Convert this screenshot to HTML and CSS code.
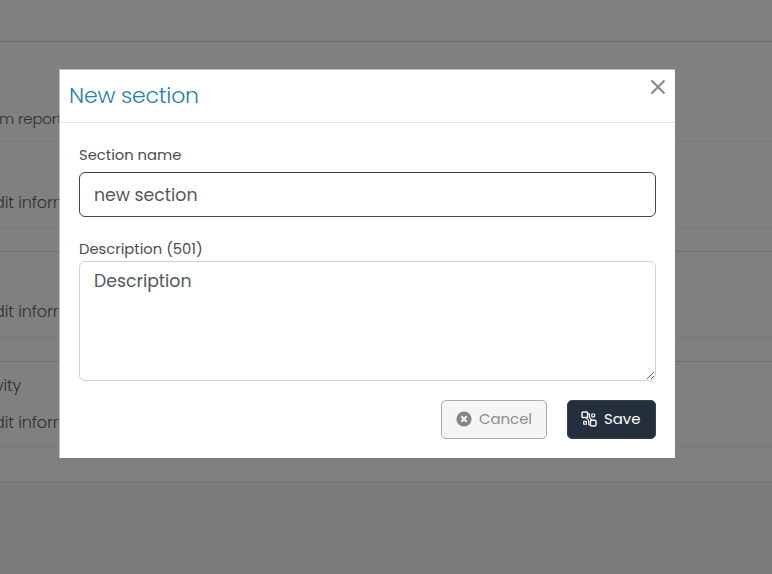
FILE: index.html
```html
<!DOCTYPE html>
<html lang="en">
<head>
<meta charset="utf-8">
<title>New section</title>
<link rel="stylesheet" href="styles.css">
</head>
<body>
<main class="page">
  <div class="topbar"></div>
  <section class="card first"><p class="line report">m report</p></section>
  <section class="card second"><p class="line edit">dit inform</p></section>
  <div class="gap"></div>
  <section class="card third"><p class="line edit">dit inform</p></section>
  <div class="gap"></div>
  <section class="card fourth"><p class="line activity">vity</p><p class="line edit">dit inform</p></section>
  <div class="end"></div>
</main>
<div class="overlay">
  <form class="dialog">
    <header class="dialog-header">
      <h1 class="title">New section</h1>
      <button type="button" class="close" aria-label="Close">
        <svg width="16" height="16" viewBox="0 0 16 16"><path d="M1.5 1.5l13 13M14.5 1.5l-13 13" fill="none" stroke="#858787" stroke-width="2"/></svg>
      </button>
    </header>
    <div class="dialog-body">
      <label class="label name-label" for="name"><span>Section name</span></label>
      <input class="field name" id="name" value="new section">
      <label class="label desc-label" for="desc"><span>Description (501)</span></label>
      <textarea class="field desc" id="desc">Description</textarea>
      <div class="actions">
        <button type="button" class="btn cancel">
          <svg width="16" height="16" viewBox="0 0 16 16"><circle cx="8" cy="8" r="7.6" fill="#858787"/><path d="M5.3 5.3l5.4 5.4M10.7 5.3l-5.4 5.4" stroke="#f5f5f5" stroke-width="2.2"/></svg>
          <span>Cancel</span>
        </button>
        <button type="button" class="btn save">
          <svg width="16" height="16" viewBox="0 0 16 16" fill="none" stroke="#f4f5f2" stroke-width="1.5"><rect x="1" y="1" width="5.6" height="5.6" rx=".8"/><rect x="9.4" y="9.2" width="5.6" height="5.8" rx="1.3"/><rect x="10.8" y="3" width="2.8" height="2.8" rx=".3" stroke-width="1.2"/><rect x="2.6" y="10.4" width="2.8" height="2.8" rx=".3" stroke-width="1.2"/><path d="M6.6 2.6l1.8.4.2 4 2.4 2.2M4.8 6.6l2.8 2.6.2 4.4 1.6.4" stroke-width="1.1"/></svg>
          <span>Save</span>
        </button>
      </div>
    </div>
  </form>
</div>
</body>
</html>
```
FILE: styles.css
```css
* { box-sizing: border-box; }
body {
  margin: 0;
  height: 574px;
  overflow: hidden;
  background: #808080;
  font-family: Poppins, Inter, "Open Sans", sans-serif;
}
.page { height: 574px; display: flex; flex-direction: column; }
.topbar { height: 42px; background: #7e807f; border-bottom: 1px solid #6b6d6c; }
.card { display: flex; flex-direction: column; justify-content: flex-end; border-bottom: 1px solid #777878; }
.first { height: 100px; padding-bottom: 10px; }
.second { height: 86px; padding-bottom: 12px; }
.third { height: 86px; padding-bottom: 13px; }
.fourth { height: 85px; padding-bottom: 11px; }
.gap { height: 24px; border-bottom: 1px solid #6f7070; }
.gap + .card { border-bottom-color: #777; }
.end { flex: 1; margin-top: 34px; background: #7a7c7b; border-top: 1px solid #747675; }
.line { margin: 0; color: #2e3030; font-size: 16px; font-weight: 300; line-height: 24px; white-space: nowrap; }
.report { margin-left: -1px; font-size: 15px; letter-spacing: -.2px; }
.edit { margin-left: -6px; letter-spacing: -.1px; }
.activity { margin: 0 0 13px -5px; letter-spacing: -.2px; }
.overlay { position: absolute; left: 59px; top: 69px; }
.dialog { width: 616px; height: 389px; background: #fff; border: 1px solid #c0c0c0; border-width: 1px 0 0 1px; }
.dialog-header { display: flex; justify-content: space-between; height: 53px; border-bottom: 1px solid #dfe2e2; padding: 0 9px; }
.title { margin: 0; color: #2580ae; font-size: 22px; font-weight: 300; line-height: 52px; letter-spacing: -.2px; }
.close { width: 16px; height: 16px; margin-top: 9px; padding: 0; border: 0; background: none; }
.close svg, .btn svg { display: block; flex: none; }
.dialog-body { display: flex; flex-direction: column; padding: 20px 19px; }
.label { color: #484c55; font-size: 14.75px; font-weight: 400; line-height: 24px; }
.name-label { line-height: 25px; }
.desc-label { margin-top: 20px; }
.field { width: 577px; font-family: inherit; font-size: 17.3px; font-weight: 400; color: #51585c; background: #fff; border-radius: 6px; outline: 0; }
.name { height: 45px; margin-top: 4px; padding: 0 14px; border: 1px solid #3a454d; }
.desc { height: 120px; padding: 6px 14px; border: 1px solid #d0d3d3; line-height: 27px; }
.actions { display: flex; justify-content: flex-end; gap: 20px; margin-top: 19px; }
.btn { display: flex; align-items: center; height: 39px; padding: 0 14px 1px; border-radius: 5px; font-family: inherit; font-size: 14.9px; font-weight: 400; }
.cancel { width: 106px; gap: 7px; color: #8b8d8d; background: #f5f5f5; border: 1px solid #aaacac; }
.save { width: 89px; gap: 7px; padding-left: 13px; color: #fff; background: #232f3c; border: 1px solid #35404b; }
```
